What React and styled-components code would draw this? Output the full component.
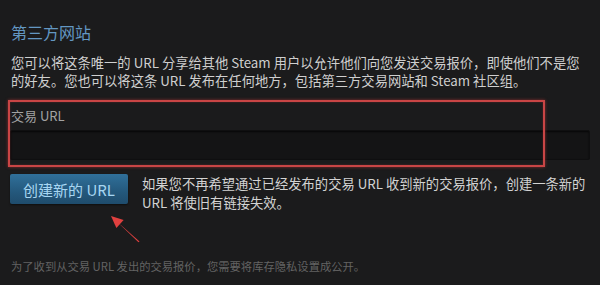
import React from "react";
import styled, { createGlobalStyle } from "styled-components";

const Global = createGlobalStyle`
  html, body { margin: 0; padding: 0; background: #1b1b1c; }
  body { font-family: "Noto Sans CJK SC", "Noto Sans", sans-serif; }
`;

const Page = styled.div`
  position: relative;
  width: 600px;
  height: 285px;
  box-sizing: border-box;
  padding: 22px 10px 0 11px;
  background: #1b1b1c;
  overflow: hidden;
`;

const Title = styled.h2`
  margin: 0;
  font-size: 16px;
  line-height: 20px;
  font-weight: 400;
  color: #6397c2;
`;

const Paragraph = styled.p`
  margin: ${(p) => p.$mt || 0}px 0 0;
  font-size: 13.3px;
  line-height: ${(p) => p.$lh || 18}px;
  color: #cfcfcf;
  white-space: nowrap;
`;

const Label = styled.div`
  margin-top: 17px;
  font-size: 13px;
  line-height: 18px;
  color: #a3a3a3;
`;

const UrlInput = styled.div`
  margin: 5px 0 0 -1px;
  width: 580px;
  height: 30px;
  box-sizing: border-box;
  background: #141415;
  border: 1px solid #0f0f10;
  border-radius: 2px;
  box-shadow: inset 0 1px 2px rgba(0, 0, 0, 0.7);
`;

const Row = styled.div`
  display: flex;
  align-items: flex-start;
  gap: 14px;
  margin: 14px 0 0 -1px;
`;

const Button = styled.button`
  flex: none;
  width: 118px;
  height: 30px;
  border: none;
  border-radius: 2px;
  background: linear-gradient(to bottom, #30709a 0%, #24587c 60%, #1f4c6c 100%);
  color: #a7d6f2;
  font-family: inherit;
  font-size: 15px;
  padding: 0;
  box-shadow: 0 1px 2px rgba(0, 0, 0, 0.5);
`;

const SideText = styled(Paragraph)`
  margin: 0;
  color: #d3d3d3;
`;

const Footer = styled.p`
  margin: 46px 0 0;
  font-size: 11.3px;
  line-height: 16px;
  color: #636363;
  white-space: nowrap;
`;

const Highlight = styled.div`
  position: absolute;
  left: 8px;
  top: 100px;
  width: 537px;
  height: 67px;
  box-sizing: border-box;
  border: 2px solid #c94545;
  box-shadow: 0 0 3px rgba(210, 60, 60, 0.6), inset 0 0 2px rgba(210, 60, 60, 0.4);
  pointer-events: none;
`;

const ArrowSvg = styled.svg`
  position: absolute;
  left: 100px;
  top: 205px;
  width: 50px;
  height: 45px;
`;

export default function App() {
  return (
    <>
      <Global />
      <Page>
        <Title>第三方网站</Title>
        <Paragraph $mt={12}>
          您可以将这条唯一的 URL 分享给其他 Steam 用户以允许他们向您发送交易报价，即使他们不是您
          <br />
          的好友。您也可以将这条 URL 发布在任何地方，包括第三方交易网站和 Steam 社区组。
        </Paragraph>
        <Label>交易 URL</Label>
        <UrlInput />
        <Row>
          <Button>创建新的 URL</Button>
          <SideText $lh={19}>
            如果您不再希望通过已经发布的交易 URL 收到新的交易报价，创建一条新的
            <br />
            URL 将使旧有链接失效。
          </SideText>
        </Row>
        <Footer>为了收到从交易 URL 发出的交易报价，您需要将库存隐私设置成公开。</Footer>
        <Highlight />
        <ArrowSvg viewBox="100 205 50 45">
          <polygon points="111,216 123.6,219.9 116.4,228.1" fill="#e0403f" />
          <polygon points="118.6,223.2 121.4,225.4 139.5,241.5 138.5,242.2" fill="#e0403f" />
        </ArrowSvg>
      </Page>
    </>
  );
}
